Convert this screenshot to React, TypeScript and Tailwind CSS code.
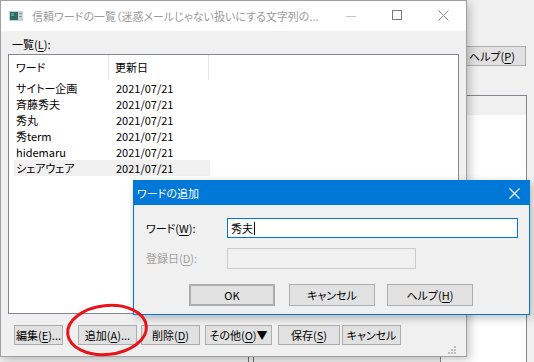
const U = ({ c }: { c: string }) => <span className="underline underline-offset-[2px]">{c}</span>;

const rows = [
  ["サイトー企画", "2021/07/21"],
  ["斉藤秀夫", "2021/07/21"],
  ["秀丸", "2021/07/21"],
  ["秀term", "2021/07/21"],
  ["hidemaru", "2021/07/21"],
  ["シェアウェア", "2021/07/21"],
];

const btn =
  "h-[20px] flex items-center justify-center border border-[#adadad] bg-[#e1e1e1] text-black";
const dlgBtn =
  "w-[86px] h-[22px] flex items-center justify-center border border-[#adadad] bg-[#e1e1e1] text-black";

const MainWindow = () => (
  <div className="absolute left-0 top-0 w-[467px] h-[357px] flex flex-col border border-[#a0a0a0] bg-[#f0f0f0] shadow-[3px_3px_9px_rgba(0,0,0,0.22)]">
    <div className="h-[30px] shrink-0 bg-white flex items-center">
      <svg width="14" height="10" viewBox="0 0 14 10" className="ml-[8px]">
        <rect x="0" y="0" width="14" height="10" fill="#c8cfcf" />
        <rect x="1" y="1" width="8" height="8" fill="#2f6a63" />
        <rect x="2" y="2" width="3" height="3" fill="#4f9c8c" />
        <rect x="10" y="2" width="3" height="1" fill="#8a9a9a" />
        <rect x="10" y="5" width="3" height="1" fill="#8a9a9a" />
      </svg>
      <span className="ml-[9px] text-[11px] text-[#9b9b9b] whitespace-nowrap">
        信頼ワードの一覧（迷惑メールじゃない扱いにする文字列の...
      </span>
      <div className="ml-auto flex h-full">
        <div className="w-[46px] flex items-center justify-center">
          <div className="w-[10px] h-px bg-[#c4c4c4]" />
        </div>
        <div className="w-[46px] flex items-center justify-center">
          <div className="w-[10px] h-[10px] border border-[#7a7a7a] -mt-[2px]" />
        </div>
        <div className="w-[46px] flex items-center justify-center">
          <svg width="11" height="11" viewBox="0 0 11 11" className="-mt-[2px]">
            <path d="M0.5 0.5 L10.5 10.5 M10.5 0.5 L0.5 10.5" stroke="#8a8a8a" strokeWidth="1" />
          </svg>
        </div>
      </div>
    </div>

    <div className="flex-1 flex flex-col px-[7px]">
      <div className="mt-[4px] h-[18px] flex items-center pl-[4px] text-[11px] text-black">
        一覧(<U c="L" />):
      </div>
      <div className="mt-[1px] h-[260px] border border-[#828790] bg-white flex flex-col">
        <div className="h-[25px] flex items-center text-[11px] text-black">
          <div className="ml-[5px] w-[95px] h-full flex items-center pl-[2px] border-r border-[#e5e5e5]">ワード</div>
          <div className="w-[100px] h-full flex items-center pl-[6px] border-r border-[#e5e5e5]">更新日</div>
        </div>
        {rows.map(([w, d], i) => (
          <div
            key={w}
            className={`ml-[5px] w-[196px] h-[16px] flex items-center text-[11px] text-black ${
              i === rows.length - 1 ? "bg-[#f0f0f0]" : ""
            }`}
          >
            <div className="w-[96px] pl-[2px] whitespace-nowrap">{w}</div>
            <div className="pl-[6px]">{d}</div>
          </div>
        ))}
      </div>
      <div className="mt-[11px] flex text-[11px]">
        <div className={`${btn} ml-[6px] w-[49px]`}>
          編集(<U c="E" />)...
        </div>
        <div className={`${btn} ml-[15px] w-[59px]`}>
          追加(<U c="A" />)...
        </div>
        <div className={`${btn} ml-[4px] w-[59px]`}>
          削除(<U c="D" />)
        </div>
        <div className={`${btn} ml-[5px] w-[67px]`}>
          その他(<U c="O" />)▼
        </div>
        <div className={`${btn} ml-[6px] w-[62px]`}>
          保存(<U c="S" />)
        </div>
        <div className={`${btn} ml-[2px] w-[59px]`}>キャンセル</div>
      </div>
    </div>

    <svg width="8" height="8" viewBox="0 0 8 8" className="absolute right-[10px] bottom-[2px]">
      <rect x="6" y="0" width="2" height="2" fill="#c0c0c0" />
      <rect x="3" y="3" width="2" height="2" fill="#c0c0c0" />
      <rect x="6" y="3" width="2" height="2" fill="#c0c0c0" />
      <rect x="0" y="6" width="2" height="2" fill="#c0c0c0" />
      <rect x="3" y="6" width="2" height="2" fill="#c0c0c0" />
      <rect x="6" y="6" width="2" height="2" fill="#c0c0c0" />
    </svg>
  </div>
);

const AddDialog = () => (
  <div className="absolute left-[133px] top-[180px] w-[397px] h-[135px] flex flex-col border border-[#0078d7] bg-[#f0f0f0] shadow-[2px_3px_8px_rgba(0,0,0,0.25)] text-[11px]">
    <div className="h-[24px] shrink-0 bg-[#0078d7] flex items-center text-white pl-[3px]">
      <span>ワードの追加</span>
      <svg width="11" height="11" viewBox="0 0 11 11" className="ml-auto mr-[9px]">
        <path d="M0.5 0.5 L10.5 10.5 M10.5 0.5 L0.5 10.5" stroke="#ffffff" strokeWidth="1.2" />
      </svg>
    </div>
    <div className="flex flex-col pl-[12px]">
      <div className="mt-[13px] h-[20px] flex items-center">
        <div className="w-[81px] text-black">
          ワード(<U c="W" />):
        </div>
        <div className="w-[291px] h-[20px] border border-[#0078d7] bg-white flex items-center pl-[3px] text-black">
          秀夫<span className="ml-px w-px h-[13px] bg-black" />
        </div>
      </div>
      <div className="mt-[10px] h-[21px] flex items-center">
        <div className="w-[81px] text-[#a0a0a0]">
          登録日(<U c="D" />):
        </div>
        <div className="w-[189px] h-[21px] border border-[#cccccc] bg-[#f0f0f0]" />
      </div>
      <div className="mt-[15px] flex pl-[43px]">
        <div className={`${dlgBtn} border-2 border-[#0078d7]`}>OK</div>
        <div className={`${dlgBtn} ml-[14px]`}>キャンセル</div>
        <div className={`${dlgBtn} ml-[12px]`}>
          ヘルプ(<U c="H" />)
        </div>
      </div>
    </div>
  </div>
);

export default function App() {
  return (
    <div className="relative w-[534px] h-[362px] overflow-hidden bg-[#f0f0f0] [font-family:'Noto_Sans_CJK_JP','Noto_Sans',sans-serif] [font-feature-settings:'palt'] leading-none">
      {/* window behind */}
      <div className="absolute left-[458px] top-[46px] w-[68px] h-[20px] flex items-center justify-center border border-[#adadad] bg-[#e1e1e1] text-[11px] text-black">
        ヘルプ(<U c="P" />)
      </div>
      <div className="absolute left-[440px] top-[95px] w-[87px] h-[300px] border border-[#828790] bg-white">
        <div className="h-[19px] bg-[#f0f0f0]" />
      </div>
      <div className="absolute left-[248px] top-[356px] w-px h-[6px] bg-[#6a6a6a]" />
      <div className="absolute left-[253px] top-[356px] w-px h-[6px] bg-[#6a6a6a]" />

      <MainWindow />
      <AddDialog />

      <svg width="100" height="66" viewBox="0 0 100 66" className="absolute left-[58px] top-[298px]">
        <ellipse
          cx="49"
          cy="32"
          rx="39.5"
          ry="24.5"
          transform="rotate(-6 49 32)"
          fill="none"
          stroke="#e8141b"
          strokeWidth="3"
        />
      </svg>
    </div>
  );
}
